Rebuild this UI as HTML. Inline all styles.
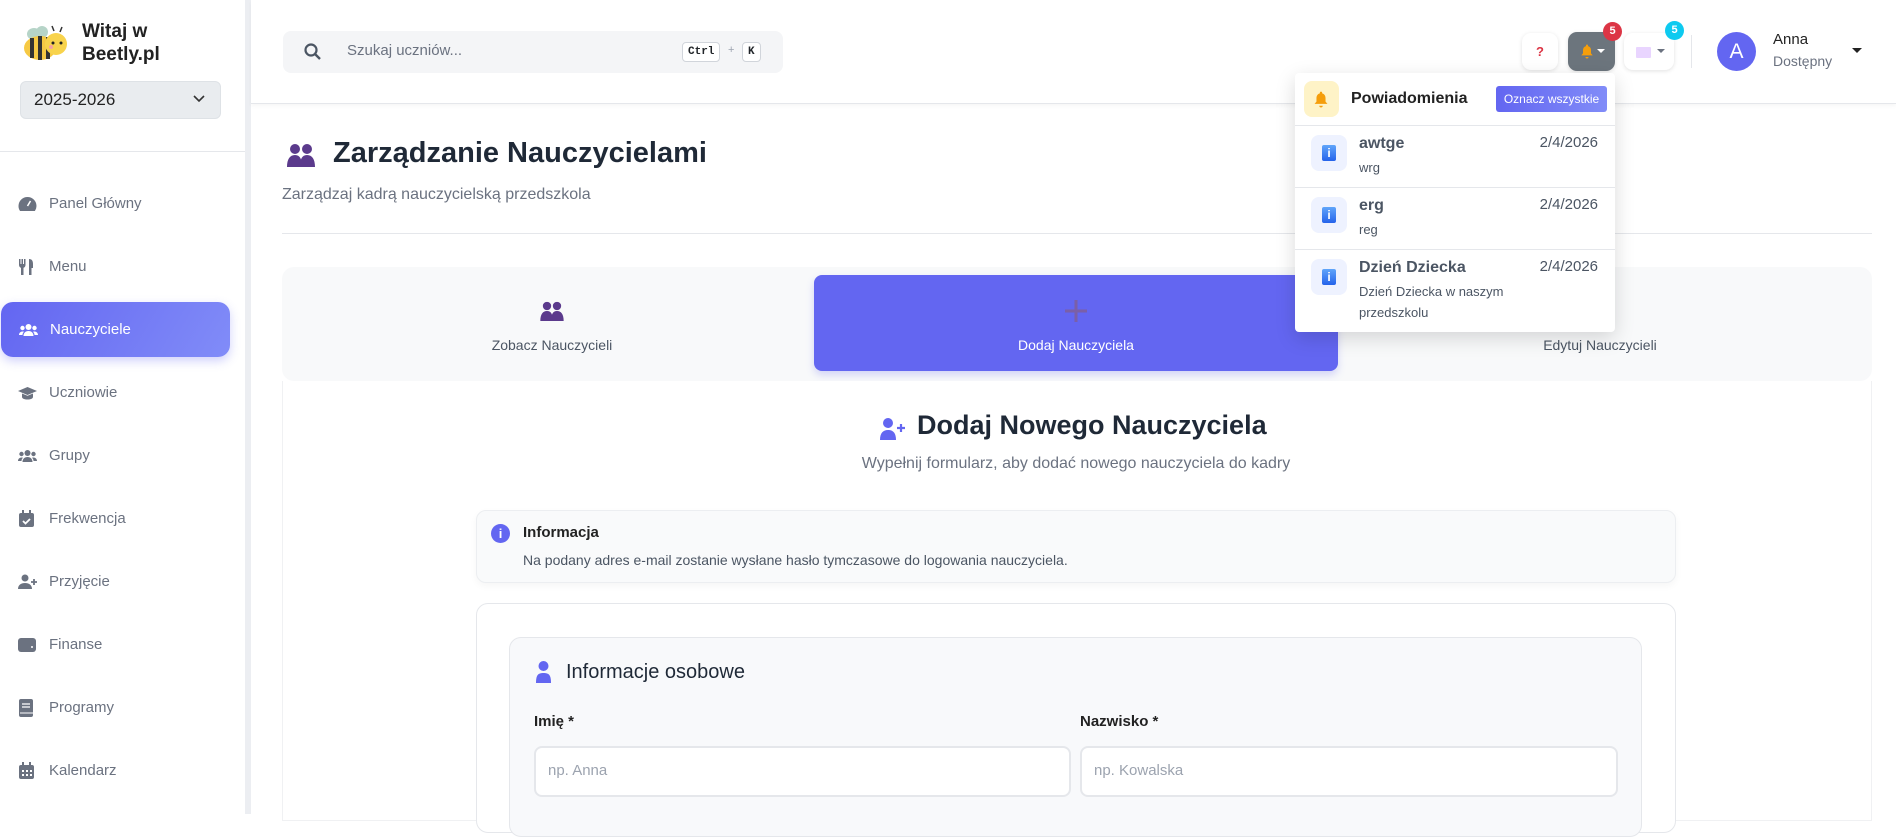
<!DOCTYPE html>
<html><head><meta charset="utf-8"><style>
*{box-sizing:border-box;margin:0;padding:0}
body{width:1896px;height:814px;overflow:hidden;background:#fff;font-family:"Liberation Sans",sans-serif;position:relative;color:#212529}
.abs{position:absolute}
.sb{left:0;top:0;width:245px;height:814px;background:#fff}
.sbstrip{left:245px;top:0;width:6px;height:814px;background:#eceef2}
.nav{position:absolute;left:0;width:229px;height:55px;display:flex;align-items:center;font-size:15px;color:#6b7280}
.nav svg{position:absolute;left:18px}
.nav span{position:absolute;left:49px}
.nav.act{background:linear-gradient(120deg,#6366f1,#818cf8);color:#fff;border-radius:12px;box-shadow:0 4px 10px rgba(99,102,241,.3);left:1px}
.tab{position:absolute;top:275px;height:96px;width:524px;text-align:center;font-size:14px;color:#4b5563}
.tab .t{position:absolute;top:62px;width:100%}
.btn{position:absolute;top:33px;height:37px;border-radius:9px;background:#fff;box-shadow:0 1px 4px rgba(0,0,0,.12)}
.badge{position:absolute;width:19px;height:19px;border-radius:50%;color:#fff;font-size:11px;font-weight:bold;text-align:center;line-height:19px}
.nitem{position:absolute;left:1295px;width:320px;border-top:1px solid #e5e7eb}
.ibox{position:absolute;left:16px;top:9px;width:36px;height:36px;background:#eef2ff;border-radius:8px}
.ibox i{position:absolute;left:11px;top:10px;width:14px;height:16px;background:linear-gradient(#60a5fa,#2563eb);border-radius:2px;color:#fff;font-style:normal;font-weight:bold;font-size:12px;text-align:center;line-height:16px}
.ntitle{position:absolute;left:64px;top:9px;font-size:16px;font-weight:bold;color:#4b5563}
.ndate{position:absolute;right:17px;top:8px;font-size:15px;color:#4b5563}
.nsub{position:absolute;left:64px;top:31px;font-size:13px;color:#4b5563;line-height:21px}
.inp{position:absolute;top:746px;height:51px;background:#fff;border:2px solid #e5e7eb;border-radius:8px;font-size:15px;color:#9ca3af;padding:14px 0 0 12px}
</style></head><body>
<div class="abs sb"></div><div class="abs sbstrip"></div>
<svg class="abs" style="left:20px;top:24px" width="50" height="40" viewBox="0 0 50 40"><ellipse cx="14" cy="10" rx="7" ry="6" fill="#b6d4c8"/><ellipse cx="22" cy="8" rx="6" ry="6" fill="#b6d4c8"/><ellipse cx="20" cy="24" rx="16" ry="12" fill="#f6c944"/><path d="M12 14v20M20 12v24M28 13v22" stroke="#333" stroke-width="4"/><circle cx="36" cy="20" r="11" fill="#f8d34c"/><circle cx="33" cy="19" r="1.5" fill="#222"/><circle cx="41" cy="19" r="1.5" fill="#222"/><circle cx="31" cy="23" r="2" fill="#f5a0a0"/><path d="M34 7l-2-5M40 8l2-5" stroke="#333" stroke-width="1.5"/></svg>
<div class="abs" style="left:82px;top:20px;font-size:19px;font-weight:bold;line-height:23px;color:#222">Witaj w<br>Beetly.pl</div>
<div class="abs" style="left:20px;top:81px;width:201px;height:38px;background:#e9ecef;border:1px solid #dee2e6;border-radius:6px;font-size:17px;padding:8px 0 0 13px;color:#222">2025-2026</div>
<svg class="abs" style="left:193px;top:95px" width="12" height="8"><path d="M1 1l5 5 5-5" stroke="#333" stroke-width="1.6" fill="none"/></svg>
<div class="abs" style="left:0;top:151px;width:245px;height:1px;background:#e5e7eb"></div>

<div class="nav" style="top:176px"><svg width="19" height="16" viewBox="0 0 19 16"><path d="M9.5 1a9 9 0 0 0-9 9c0 2 .6 3.7 1.6 5h14.8a9 9 0 0 0 1.6-5 9 9 0 0 0-9-9z" fill="#6b7280"/><path d="M9.5 10l3-5" stroke="#fff" stroke-width="1.5"/></svg><span>Panel Główny</span></div>
<div class="nav" style="top:239px"><svg width="18" height="18" viewBox="0 0 18 18"><path d="M1 1v6c0 1.5 1 2.5 2 2.8V17h2.5V9.8C6.5 9.5 7.5 8.5 7.5 7V1H6v5H5V1H3.5v5h-1V1zM11 1c3 0 4 2 4 5v4h-1.5v7H11z" fill="#6b7280"/></svg><span>Menu</span></div>
<div class="nav act" style="top:302px"><svg width="19" height="14" viewBox="0 0 19 14"><circle cx="9.5" cy="4" r="3" fill="#fff"/><circle cx="3.5" cy="5" r="2.2" fill="#fff"/><circle cx="15.5" cy="5" r="2.2" fill="#fff"/><path d="M4.5 13c0-3 2-5 5-5s5 2 5 5zM0 12c0-2 1.5-3.5 3.5-3.5 1 0 1.5.3 1.5.3-1 1-1.5 2-1.5 3.2zM19 12c0-2-1.5-3.5-3.5-3.5-1 0-1.5.3-1.5.3 1 1 1.5 2 1.5 3.2z" fill="#fff"/></svg><span>Nauczyciele</span></div>
<div class="nav" style="top:365px"><svg width="19" height="14" viewBox="0 0 19 14"><path d="M9.5 1L0 5l9.5 4L19 5zM4 7.5v3.5c0 1.5 2.5 2.5 5.5 2.5s5.5-1 5.5-2.5V7.5l-5.5 2.3z" fill="#6b7280"/></svg><span>Uczniowie</span></div>
<div class="nav" style="top:428px"><svg width="19" height="14" viewBox="0 0 19 14"><circle cx="9.5" cy="4" r="3" fill="#6b7280"/><circle cx="3.5" cy="5" r="2.2" fill="#6b7280"/><circle cx="15.5" cy="5" r="2.2" fill="#6b7280"/><path d="M4.5 13c0-3 2-5 5-5s5 2 5 5zM0 12c0-2 1.5-3.5 3.5-3.5 1 0 1.5.3 1.5.3-1 1-1.5 2-1.5 3.2zM19 12c0-2-1.5-3.5-3.5-3.5-1 0-1.5.3-1.5.3 1 1 1.5 2 1.5 3.2z" fill="#6b7280"/></svg><span>Grupy</span></div>
<div class="nav" style="top:491px"><svg width="17" height="18" viewBox="0 0 17 18"><rect x="1" y="3" width="15" height="14" rx="2" fill="#6b7280"/><rect x="4" y="0" width="2" height="4" fill="#6b7280"/><rect x="11" y="0" width="2" height="4" fill="#6b7280"/><path d="M5 11l2.5 2.5L12 9" stroke="#fff" stroke-width="1.8" fill="none"/></svg><span>Frekwencja</span></div>
<div class="nav" style="top:554px"><svg width="19" height="16" viewBox="0 0 19 16"><circle cx="7" cy="4" r="3.5" fill="#6b7280"/><path d="M0 15c0-4 3-6 7-6s7 2 7 6z" fill="#6b7280"/><path d="M16 5v6M13 8h6" stroke="#6b7280" stroke-width="1.8"/></svg><span>Przyjęcie</span></div>
<div class="nav" style="top:617px"><svg width="18" height="16" viewBox="0 0 18 16"><rect x="0" y="1" width="18" height="14" rx="3" fill="#6b7280"/><circle cx="14" cy="10" r="1" fill="#fff"/></svg><span>Finanse</span></div>
<div class="nav" style="top:680px"><svg width="16" height="18" viewBox="0 0 16 18"><rect x="1" y="0" width="14" height="18" rx="2" fill="#6b7280"/><path d="M4 5h8M4 8h8" stroke="#fff" stroke-width="1.3"/><path d="M2 14h13" stroke="#fff" stroke-width="1"/></svg><span>Programy</span></div>
<div class="nav" style="top:743px"><svg width="17" height="18" viewBox="0 0 17 18"><rect x="1" y="3" width="15" height="14" rx="2" fill="#6b7280"/><rect x="4" y="0" width="2" height="4" fill="#6b7280"/><rect x="11" y="0" width="2" height="4" fill="#6b7280"/><path d="M4 9h2M8 9h2M12 9h2M4 13h2M8 13h2M12 13h2" stroke="#fff" stroke-width="2"/></svg><span>Kalendarz</span></div>

<div class="abs" style="left:251px;top:0;width:1645px;height:104px;border-bottom:1px solid #e5e7eb;box-shadow:0 2px 4px rgba(0,0,0,.04)"></div>
<div class="abs" style="left:283px;top:31px;width:500px;height:42px;background:#f4f5f7;border-radius:8px"></div>
<svg class="abs" style="left:304px;top:43px" width="17" height="17" viewBox="0 0 17 17"><circle cx="7" cy="7" r="5.5" stroke="#4b5563" stroke-width="2.2" fill="none"/><path d="M11 11l5 5" stroke="#4b5563" stroke-width="2.4"/></svg>
<div class="abs" style="left:347px;top:42px;font-size:15px;color:#6b7280">Szukaj uczniów...</div>
<div class="abs" style="left:682px;top:42px;height:20px;padding:0 5px;border:1px solid #d1d5db;border-radius:4px;background:#fff;font-family:'Liberation Mono',monospace;font-size:11px;font-weight:bold;line-height:18px">Ctrl</div>
<div class="abs" style="left:728px;top:44px;font-size:11px;color:#9ca3af">+</div>
<div class="abs" style="left:742px;top:42px;height:20px;padding:0 5px;border:1px solid #d1d5db;border-radius:4px;background:#fff;font-family:'Liberation Mono',monospace;font-size:11px;font-weight:bold;line-height:18px">K</div>

<div class="btn" style="left:1522px;width:36px;text-align:center;color:#dc3545;font-weight:bold;font-size:13px;line-height:37px">?</div>
<div class="btn" style="left:1568px;width:47px;top:32px;height:39px;background:#6c757d"><svg class="abs" style="left:13px;top:12px" width="12" height="15" viewBox="0 0 12 15"><path d="M6 0.5c.6 0 1 .4 1 1v.6c2 .5 3 2.1 3 4.3v3l1.7 2H.3l1.7-2v-3c0-2.2 1-3.8 3-4.3v-.6c0-.6.4-1 1-1zM4.5 13h3a1.5 1.5 0 0 1-3 0z" fill="#f59e0b"/></svg><svg class="abs" style="left:29px;top:17px" width="8" height="5"><path d="M0 0h8L4 4z" fill="#fff"/></svg></div>
<div class="badge" style="left:1603px;top:22px;background:#dc3545">5</div>
<div class="btn" style="left:1624px;width:50px"><div class="abs" style="left:12px;top:14px;width:15px;height:11px;background:#e9d5ff;border-radius:1px"></div><svg class="abs" style="left:33px;top:16px" width="8" height="5"><path d="M0 0h8L4 4z" fill="#6b7280"/></svg></div>
<div class="badge" style="left:1665px;top:21px;background:#0dcaf0">5</div>
<div class="abs" style="left:1691px;top:35px;width:1px;height:33px;background:#e5e7eb"></div>
<div class="abs" style="left:1717px;top:32px;width:39px;height:39px;border-radius:50%;background:#6366f1;color:#fff;font-size:21px;text-align:center;line-height:39px">A</div>
<div class="abs" style="left:1773px;top:31px;font-size:15px;color:#222">Anna</div>
<div class="abs" style="left:1773px;top:53px;font-size:14px;color:#6b7280">Dostępny</div>
<svg class="abs" style="left:1852px;top:48px" width="10" height="6"><path d="M0 0h10L5 5z" fill="#222"/></svg>

<svg class="abs" style="left:287px;top:143px" width="28" height="24" viewBox="0 0 28 24"><circle cx="8" cy="6" r="5" fill="#5b3a8c"/><circle cx="20" cy="6" r="5" fill="#5b3a8c"/><path d="M0 24c0-8 3-12 8-12s7 4 7 12zM13 24c0-8 2-12 7-12s8 4 8 12z" fill="#5b3a8c"/></svg>
<div class="abs" style="left:333px;top:137px;font-size:29px;font-weight:bold;color:#1f2937">Zarządzanie Nauczycielami</div>
<div class="abs" style="left:282px;top:186px;font-size:16px;color:#6b7280">Zarządzaj kadrą nauczycielską przedszkola</div>
<div class="abs" style="left:282px;top:233px;width:1590px;height:1px;background:#e5e7eb"></div>

<div class="abs" style="left:282px;top:267px;width:1590px;height:114px;background:#f8f9fa;border-radius:12px"></div>
<div class="tab" style="left:290px"><svg class="abs" style="left:250px;top:26px" width="24" height="20" viewBox="0 0 28 24"><circle cx="8" cy="6" r="5" fill="#5b3a8c"/><circle cx="20" cy="6" r="5" fill="#5b3a8c"/><path d="M0 24c0-8 3-12 8-12s7 4 7 12zM13 24c0-8 2-12 7-12s8 4 8 12z" fill="#5b3a8c"/></svg><div class="t">Zobacz Nauczycieli</div></div>
<div class="tab" style="left:814px;background:#6366f1;border-radius:8px;color:#fff;box-shadow:0 4px 8px rgba(99,102,241,.25)"><svg class="abs" style="left:250px;top:24px" width="24" height="24"><path d="M12 1v22M1 12h22" stroke="#7a5fa8" stroke-width="3"/></svg><div class="t">Dodaj Nauczyciela</div></div>
<div class="tab" style="left:1338px"><div class="t">Edytuj Nauczycieli</div></div>

<div class="abs" style="left:282px;top:381px;width:1590px;height:440px;background:#fff;border:1px solid #f0f1f3;border-top:none"></div>
<svg class="abs" style="left:880px;top:418px" width="26" height="22" viewBox="0 0 26 22"><circle cx="8" cy="5" r="5" fill="#6366f1"/><path d="M0 22c0-7 3-10 8-10s8 3 8 10z" fill="#6366f1"/><path d="M21 6v8M17 10h8" stroke="#6366f1" stroke-width="2.2"/></svg>
<div class="abs" style="left:917px;top:410px;font-size:27px;font-weight:bold;color:#1f2937">Dodaj Nowego Nauczyciela</div>
<div class="abs" style="left:0;width:2152px;top:455px;text-align:center;font-size:16px;color:#6b7280">Wypełnij formularz, aby dodać nowego nauczyciela do kadry</div>

<div class="abs" style="left:476px;top:510px;width:1200px;height:73px;background:#f9fafb;border:1px solid #eceef1;border-radius:10px;box-shadow:0 3px 8px rgba(0,0,0,.04)"></div>
<div class="abs" style="left:491px;top:524px;width:19px;height:19px;border-radius:50%;background:#6366f1;color:#fff;font-size:13px;font-weight:bold;text-align:center;line-height:19px">i</div>
<div class="abs" style="left:523px;top:524px;font-size:15px;font-weight:bold;color:#222">Informacja</div>
<div class="abs" style="left:523px;top:552px;font-size:14px;color:#4b5563">Na podany adres e-mail zostanie wysłane hasło tymczasowe do logowania nauczyciela.</div>

<div class="abs" style="left:476px;top:603px;width:1200px;height:230px;background:#fff;border:1px solid #e5e7eb;border-radius:12px"></div>
<div class="abs" style="left:509px;top:637px;width:1133px;height:200px;background:#f8f9fb;border:1px solid #e5e7eb;border-radius:12px"></div>
<svg class="abs" style="left:536px;top:661px" width="15" height="22" viewBox="0 0 15 22"><circle cx="7.5" cy="5" r="5" fill="#6366f1"/><path d="M0 22c0-8 2-10 7.5-10S15 14 15 22z" fill="#6366f1"/></svg>
<div class="abs" style="left:566px;top:661px;font-size:20px;color:#1f2937">Informacje osobowe</div>
<div class="abs" style="left:534px;top:713px;font-size:15px;font-weight:bold;color:#222">Imię *</div>
<div class="abs" style="left:1080px;top:713px;font-size:15px;font-weight:bold;color:#222">Nazwisko *</div>
<div class="inp" style="left:534px;width:537px">np. Anna</div>
<div class="inp" style="left:1080px;width:538px">np. Kowalska</div>

<div class="abs" style="left:1295px;top:73px;width:320px;height:259px;background:#fff;border-radius:4px;box-shadow:0 6px 20px rgba(0,0,0,.15)"></div>
<div class="abs" style="left:1304px;top:81px;width:35px;height:36px;background:#fef3c7;border-radius:8px"><svg class="abs" style="left:10px;top:10px" width="14" height="17" viewBox="0 0 12 15"><path d="M6 0.5c.6 0 1 .4 1 1v.6c2 .5 3 2.1 3 4.3v3l1.7 2H.3l1.7-2v-3c0-2.2 1-3.8 3-4.3v-.6c0-.6.4-1 1-1zM4.5 13h3a1.5 1.5 0 0 1-3 0z" fill="#f59e0b"/></svg></div>
<div class="abs" style="left:1351px;top:90px;font-size:16px;font-weight:bold;color:#222">Powiadomienia</div>
<div class="abs" style="left:1496px;top:86px;width:111px;height:26px;border-radius:3px;background:linear-gradient(90deg,#6366f1,#818cf8);color:#fff;font-size:12px;text-align:center;line-height:26px">Oznacz wszystkie</div>
<div class="nitem" style="top:125px;height:62px"><div class="ibox"><i>i</i></div><div class="ntitle">awtge</div><div class="ndate">2/4/2026</div><div class="nsub">wrg</div></div>
<div class="nitem" style="top:187px;height:62px"><div class="ibox"><i>i</i></div><div class="ntitle">erg</div><div class="ndate">2/4/2026</div><div class="nsub">reg</div></div>
<div class="nitem" style="top:249px;height:83px"><div class="ibox"><i>i</i></div><div class="ntitle">Dzień Dziecka</div><div class="ndate">2/4/2026</div><div class="nsub">Dzień Dziecka w naszym<br>przedszkolu</div></div>
</body></html>
